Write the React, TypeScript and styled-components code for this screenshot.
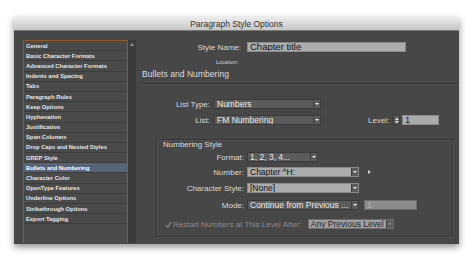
import styled, { createGlobalStyle } from "styled-components";

const GlobalStyle = createGlobalStyle`
  html, body {
    margin: 0;
    padding: 0;
    background: #ffffff;
  }
  body {
    width: 474px;
    height: 258px;
    overflow: hidden;
    font-family: "Liberation Sans", Arial, sans-serif;
  }
`;

const Window = styled.div`
  margin: 17px 0 0 14px;
  width: 445px;
  height: 227px;
  display: flex;
  flex-direction: column;
  box-shadow: 0 3px 7px rgba(0, 0, 0, 0.45);
`;

const TitleBar = styled.div`
  height: 13px;
  flex: none;
  display: flex;
  align-items: center;
  justify-content: center;
  background: linear-gradient(#ededed, #c6c6c6);
  border-bottom: 1px solid #7a7a7a;
  color: #333;
  font-size: 8.5px;
`;

const Body = styled.div`
  flex: 1;
  display: flex;
  background: #474747;
  padding: 9px 0 1px 9px;
  min-height: 0;
`;

const Sidebar = styled.div`
  width: 103px;
  border: 1px solid #8d5a2c;
  border-bottom: none;
  background: #4a4a4a;
  display: flex;
  flex-direction: column;
`;

const Item = styled.div<{ $selected?: boolean }>`
  height: 9.2px;
  border-bottom: 1px solid #3c3c3c;
  padding-left: 2px;
  display: flex;
  align-items: center;
  font-size: 5.8px;
  font-weight: bold;
  color: ${(p) => (p.$selected ? "#ffffff" : "#e6e6e6")};
  background: ${(p) => (p.$selected ? "#56637a" : "transparent")};
  white-space: nowrap;
`;

const Scroll = styled.div`
  width: 8px;
  background: #3b3b3b;
  display: flex;
  justify-content: center;
  padding-top: 3px;
`;

const UpArrow = styled.div`
  width: 0;
  height: 0;
  border-left: 2px solid transparent;
  border-right: 2px solid transparent;
  border-bottom: 3px solid #9a9a9a;
`;

const Main = styled.div`
  flex: 1;
  display: flex;
  flex-direction: column;
  margin-top: -9px;
  color: #d9d9d9;
`;

const Row = styled.div<{ $top: number; $left?: number }>`
  display: flex;
  align-items: center;
  height: 10px;
  margin-top: ${(p) => p.$top}px;
  margin-left: ${(p) => p.$left ?? 0}px;
`;

const Label = styled.div<{ $w: number }>`
  width: ${(p) => p.$w}px;
  text-align: right;
  font-size: 8px;
  white-space: nowrap;
  flex: none;
`;

const InlineLabel = styled.div<{ $left: number }>`
  margin-left: ${(p) => p.$left}px;
  font-size: 8px;
  white-space: nowrap;
`;

const Field = styled.div<{ $w: number; $left: number; $dim?: boolean }>`
  width: ${(p) => p.$w}px;
  margin-left: ${(p) => p.$left}px;
  height: 10px;
  box-sizing: border-box;
  background: ${(p) => (p.$dim ? "#8c8c8c" : "#ababab")};
  border: 1px solid ${(p) => (p.$dim ? "#6c6c6c" : "#8a8a8a")};
  color: ${(p) => (p.$dim ? "#b4b4b4" : "#111")};
  font-size: 8.5px;
  line-height: 8px;
  padding-left: 2px;
  white-space: nowrap;
  overflow: hidden;
  flex: none;
`;

const BigField = styled(Field)`
  font-size: 9.5px;
  background: #adadad;
`;

const Select = styled.div<{ $w: number; $left: number; $light?: boolean }>`
  width: ${(p) => p.$w}px;
  margin-left: ${(p) => p.$left}px;
  height: 10px;
  box-sizing: border-box;
  display: flex;
  background: ${(p) => (p.$light ? "#ababab" : "#5b5b5b")};
  border: 1px solid ${(p) => (p.$light ? "#8a8a8a" : "#3a3a3a")};
  color: ${(p) => (p.$light ? "#111" : "#e9e9e9")};
  font-size: 8.5px;
  flex: none;
`;

const SelectText = styled.div`
  flex: 1;
  padding-left: 2px;
  line-height: 8px;
  white-space: nowrap;
  overflow: hidden;
`;

const ArrowBox = styled.div<{ $dim?: boolean }>`
  width: 6px;
  background: ${(p) => (p.$dim ? "#5e5e5e" : "#5a5a5a")};
  border-left: 1px solid #3e3e3e;
  display: flex;
  align-items: center;
  justify-content: center;
  &::after {
    content: "";
    border-left: 2px solid transparent;
    border-right: 2px solid transparent;
    border-top: 2.5px solid ${(p) => (p.$dim ? "#8a8a8a" : "#f0f0f0")};
  }
`;

const DisabledSelect = styled(Select)`
  background: #9e9e9e;
  border-color: #6e6e6e;
  color: #2a2a2a;
`;

const Location = styled.div`
  margin: 7px 0 0 80px;
  height: 6px;
  font-size: 5.5px;
  line-height: 6px;
  color: #cfcfcf;
`;

const Header = styled.div`
  margin: 4px 0 0 6px;
  height: 10px;
  line-height: 10px;
  font-size: 8.6px;
  color: #dcdcdc;
`;

const Divider = styled.div`
  margin: 4px 0 0 6px;
  height: 1px;
  background: #363636;
  box-shadow: 0 1px 0 #525252;
`;

const Stepper = styled.div`
  margin-left: 4px;
  width: 7px;
  height: 10px;
  box-sizing: border-box;
  background: #626262;
  border: 1px solid #3a3a3a;
  display: flex;
  flex-direction: column;
  align-items: center;
  justify-content: center;
  gap: 1px;
`;

const StepUp = styled.div`
  border-left: 2px solid transparent;
  border-right: 2px solid transparent;
  border-bottom: 2px solid #eee;
`;

const StepDown = styled.div`
  border-left: 2px solid transparent;
  border-right: 2px solid transparent;
  border-top: 2px solid #eee;
`;

const Group = styled.div`
  margin: 14px 0 0 20px;
  width: 297px;
  height: 98px;
  box-sizing: border-box;
  border: 1px solid #363636;
  box-shadow: inset 1px 1px 0 #545454, 1px 1px 0 #545454;
  display: flex;
  flex-direction: column;
`;

const GroupTitle = styled.div`
  margin: 0 0 0 6px;
  height: 9px;
  line-height: 9px;
  font-size: 8px;
  color: #dcdcdc;
`;

const Pointer = styled.div`
  margin-left: 9px;
  border-top: 2.5px solid transparent;
  border-bottom: 2.5px solid transparent;
  border-left: 3.5px solid #d0d0d0;
`;

const Check = styled.svg`
  width: 7px;
  height: 7px;
  flex: none;
`;

const DimLabel = styled.div`
  margin-left: 1px;
  font-size: 8px;
  color: #8c8c8c;
  white-space: nowrap;
`;

const items = [
  "General",
  "Basic Character Formats",
  "Advanced Character Formats",
  "Indents and Spacing",
  "Tabs",
  "Paragraph Rules",
  "Keep Options",
  "Hyphenation",
  "Justification",
  "Span Columns",
  "Drop Caps and Nested Styles",
  "GREP Style",
  "Bullets and Numbering",
  "Character Color",
  "OpenType Features",
  "Underline Options",
  "Strikethrough Options",
  "Export Tagging",
];

export default function App() {
  return (
    <>
      <GlobalStyle />
      <Window>
        <TitleBar>Paragraph Style Options</TitleBar>
        <Body>
          <Sidebar>
            {items.map((it) => (
              <Item key={it} $selected={it === "Bullets and Numbering"}>
                {it}
              </Item>
            ))}
          </Sidebar>
          <Scroll>
            <UpArrow />
          </Scroll>
          <Main>
            <Row $top={11}>
              <Label $w={105}>Style Name:</Label>
              <BigField $w={159} $left={6}>Chapter title</BigField>
            </Row>
            <Location>Location:</Location>
            <Header>Bullets and Numbering</Header>
            <Divider />
            <Row $top={15}>
              <Label $w={74}>List Type:</Label>
              <Select $w={107} $left={4}>
                <SelectText>Numbers</SelectText>
                <ArrowBox />
              </Select>
            </Row>
            <Row $top={6}>
              <Label $w={74}>List:</Label>
              <Select $w={107} $left={4}>
                <SelectText>FM Numbering</SelectText>
                <ArrowBox />
              </Select>
              <InlineLabel $left={47}>Level:</InlineLabel>
              <Stepper>
                <StepUp />
                <StepDown />
              </Stepper>
              <Field $w={37} $left={2}>1</Field>
            </Row>
            <Group>
              <GroupTitle>Numbering Style</GroupTitle>
              <Row $top={3}>
                <Label $w={87}>Format:</Label>
                <Select $w={71} $left={3}>
                  <SelectText>1, 2, 3, 4...</SelectText>
                  <ArrowBox />
                </Select>
              </Row>
              <Row $top={5}>
                <Label $w={87}>Number:</Label>
                <Select $w={112} $left={3} $light>
                  <SelectText>Chapter ^H:</SelectText>
                  <ArrowBox />
                </Select>
                <Pointer />
              </Row>
              <Row $top={6}>
                <Label $w={87}>Character Style:</Label>
                <Select $w={112} $left={3} $light>
                  <SelectText>[None]</SelectText>
                  <ArrowBox />
                </Select>
              </Row>
              <Row $top={7}>
                <Label $w={87}>Mode:</Label>
                <Select $w={112} $left={3}>
                  <SelectText>Continue from Previous ...</SelectText>
                  <ArrowBox />
                </Select>
                <Field $w={53} $left={5} $dim>1</Field>
              </Row>
              <Row $top={9} $left={8}>
                <Check viewBox="0 0 7 7">
                  <path d="M1 4 L2.8 6 L6.2 1" fill="none" stroke="#8e8e8e" strokeWidth="1.1" />
                </Check>
                <DimLabel>Restart Numbers at This Level After:</DimLabel>
                <DisabledSelect $w={86} $left={6}>
                  <SelectText>Any Previous Level</SelectText>
                  <ArrowBox $dim />
                </DisabledSelect>
              </Row>
            </Group>
          </Main>
        </Body>
      </Window>
    </>
  );
}
